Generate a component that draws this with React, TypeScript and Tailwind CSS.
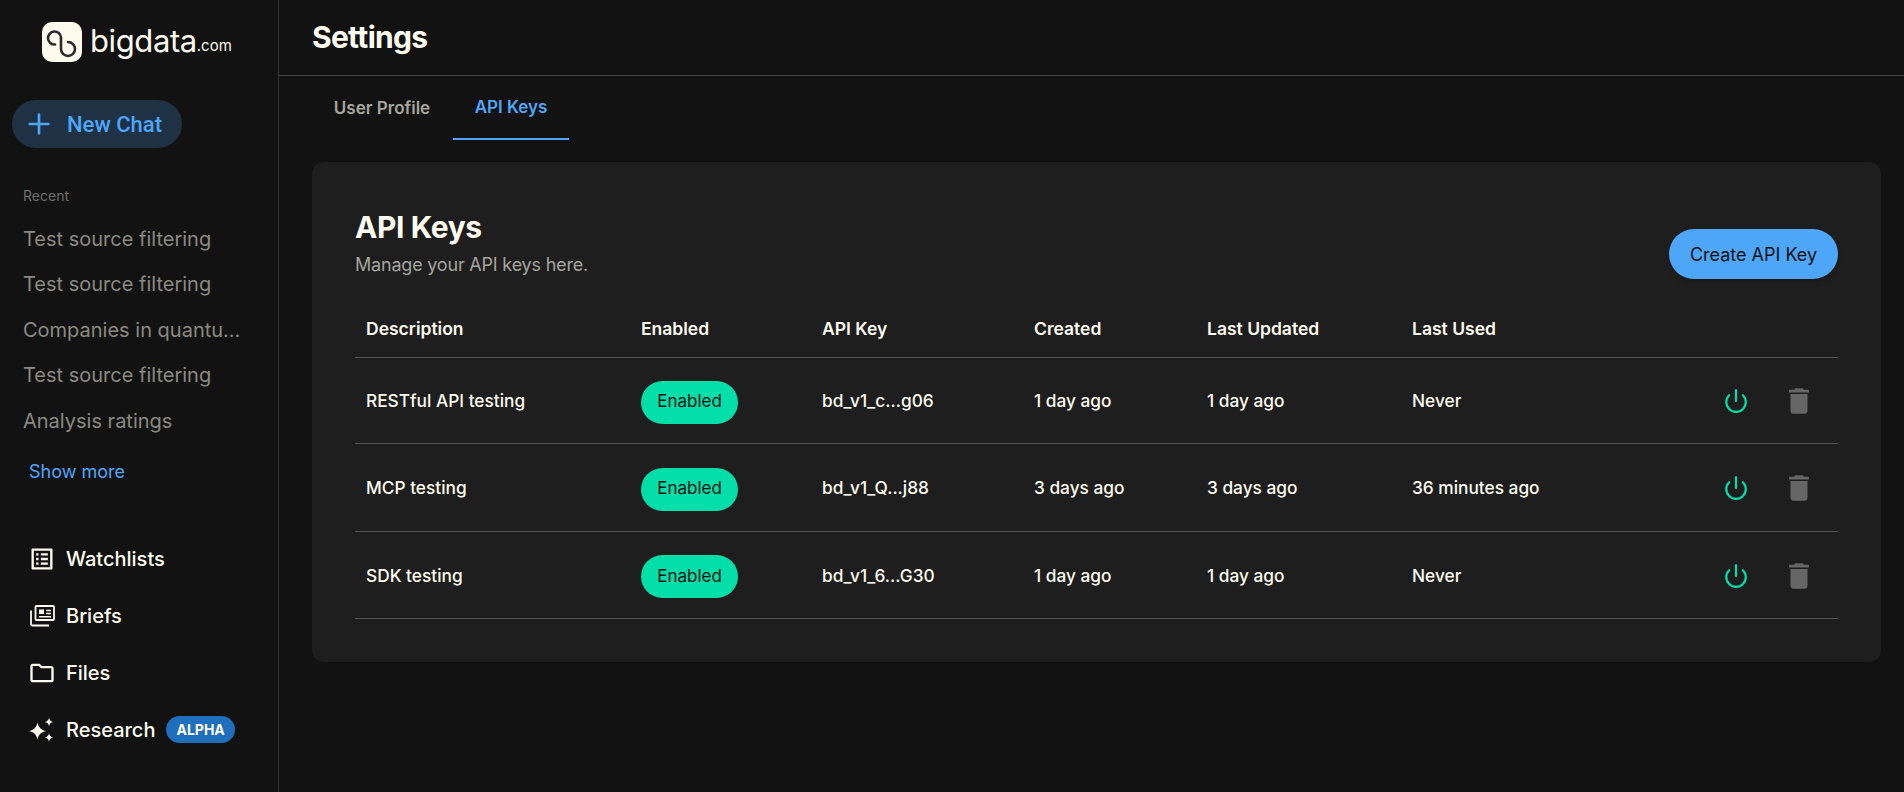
import { Plus, Power } from "lucide-react";
import { MdDelete, MdOutlineFolder, MdOutlineListAlt } from "react-icons/md";

const recent = ["Test source filtering", "Test source filtering", "Companies in quantu...", "Test source filtering", "Analysis ratings"];

const rows = [
  { name: "RESTful API testing", key: "bd_v1_c...g06", created: "1 day ago", updated: "1 day ago", used: "Never", height: "h-[86px]" },
  { name: "MCP testing", key: "bd_v1_Q...j88", created: "3 days ago", updated: "3 days ago", used: "36 minutes ago", height: "h-[88px]" },
  { name: "SDK testing", key: "bd_v1_6...G30", created: "1 day ago", updated: "1 day ago", used: "Never", height: "h-[87px]" },
];

const BriefsIcon = () => (
  <svg viewBox="0 0 28 28" className="h-7 w-7" fill="none" stroke="currentColor" strokeWidth="1.8">
    <rect x="7.500" y="4" width="18.500" height="14" rx="1" />
    <path d="M3 8.500V22a1.500 1.500 0 0 0 1.500 1.500H21" />
    <rect x="11" y="7.500" width="5" height="4.500" fill="currentColor" stroke="none" />
    <path d="M18 8.500h5M18 11.500h5M11 14.800h12" strokeWidth="1.600" />
  </svg>
);

const SparkIcon = () => (
  <svg viewBox="0 0 28 28" className="h-7 w-7" fill="currentColor">
    <path d="M9.500 6.200C10.400 11.400 13.100 14.100 18.300 15C13.100 15.900 10.400 18.600 9.500 23.800C8.600 18.600 5.900 15.900 .7 15C5.900 14.100 8.600 11.400 9.500 6.200z" />
    <path d="M21 1.800C21.500 4.300 22.700 5.500 25.200 6C22.700 6.500 21.500 7.700 21 10.200C20.500 7.700 19.300 6.500 16.800 6C19.300 5.500 20.500 4.300 21 1.800z" />
    <path d="M21 17.300C21.500 19.800 22.700 21 25.200 21.500C22.700 22 21.500 23.200 21 25.700C20.500 23.200 19.300 22 16.800 21.500C19.300 21 20.500 19.800 21 17.300z" />
  </svg>
);

const nav = [
  { icon: <MdOutlineListAlt className="h-7 w-7" />, label: "Watchlists" },
  { icon: <BriefsIcon />, label: "Briefs" },
  { icon: <MdOutlineFolder className="h-7 w-7" />, label: "Files" },
  { icon: <SparkIcon />, label: "Research" },
];

export default function App() {
  return (
    <div className="flex h-[792px] w-[1904px] overflow-hidden bg-[#121212] font-['Inter',sans-serif] text-[#fdfbf0]">
      <aside className="flex w-[279px] shrink-0 flex-col border-r border-[#333] px-3">
        <div className="flex h-[100px] items-start pl-[30px] pt-[22px]">
          <div className="flex h-10 w-10 items-center justify-center rounded-[10px] bg-[#fdfbee]">
            <svg viewBox="0 0 40 40" className="h-10 w-10" fill="none" stroke="#2a2a2a" strokeWidth="2.600" strokeLinecap="round">
              <path d="M13 22.500A6.500 6.500 0 1 1 19 15.500V27A7 7 0 1 0 26 20" />
            </svg>
          </div>
          <span className="ml-[8px] mt-[1px] text-[31px] leading-[36px] tracking-[-0.4px]">bigdata</span>
          <span className="mt-[14px] text-[15px] leading-[20px]">.com</span>
        </div>
        <button className="flex h-12 w-[170px] items-center rounded-full bg-[#1f3144] pl-[11px] font-['Roboto',sans-serif] text-[22px] font-medium text-[#4da6f8]">
          <Plus className="h-8 w-8" />
          <span className="ml-[12px]">New Chat</span>
        </button>
        <p className="mt-[38px] px-[11px] text-[14px] leading-5 text-[#70706b]">Recent</p>
        <ul className="mt-[10px] flex flex-col px-[11px]">
          {recent.map((r, i) => (
            <li key={i} className="flex h-[45.500px] items-center text-[20px] text-[#8a8a82]">{r}</li>
          ))}
        </ul>
        <a className="mt-[14px] px-[17px] text-[18px] leading-7 text-[#4da6f8]">Show more</a>
        <nav className="mt-[59px] flex flex-col gap-[29px] px-[16px]">
          {nav.map((n) => (
            <div key={n.label} className="flex h-7 items-center gap-[10px] text-[20px] font-medium">
              {n.icon}
              {n.label}
              {n.label === "Research" && (
                <span className="ml-[1px] rounded-full bg-[#1f6fbd] px-[10px] py-[3px] text-[14px] font-bold leading-[21px]">ALPHA</span>
              )}
            </div>
          ))}
        </nav>
      </aside>
      <main className="flex min-w-0 flex-1 flex-col">
        <header className="flex h-[76px] items-center border-b border-[#444] pl-[33px]">
          <h1 className="text-[30px] font-bold tracking-[-0.7px]">Settings</h1>
        </header>
        <div className="flex pl-[32px]">
          <div className="flex h-[64px] w-[142px] items-center justify-center pt-[2px] text-[17px] font-semibold text-[#a5a59e]">User Profile</div>
          <div className="flex h-[64px] w-[116px] items-center justify-center border-b-2 border-[#4da6f8] pt-[2px] text-[17px] font-semibold text-[#4da6f8]">API Keys</div>
        </div>
        <section className="ml-[33px] mr-[23px] mt-[22px] rounded-xl bg-[#1e1e1e] px-[43px] pb-[43px] pt-[44px]">
          <div className="flex items-start justify-between">
            <div>
              <h2 className="text-[30px] font-bold leading-[42px] tracking-[-0.4px]">API Keys</h2>
              <p className="mt-[3px] text-[18px] leading-7 tracking-[-0.2px] text-[#a5a59e]">Manage your API keys here.</p>
            </div>
            <button className="mt-[23px] h-[50px] w-[169px] rounded-full bg-[#4da6f8] text-[18px] text-[#121212] shadow-md">Create API Key</button>
          </div>
          <table className="mt-[23px] w-full table-fixed text-[17.300px]">
            <thead>
              <tr className="h-[55px] border-b border-[#555] text-left text-[17.500px]">
                <th className="w-[286px] pl-[11px] font-semibold">Description</th>
                <th className="w-[181px] font-semibold">Enabled</th>
                <th className="w-[212px] font-semibold">API Key</th>
                <th className="w-[173px] font-semibold">Created</th>
                <th className="w-[205px] font-semibold">Last Updated</th>
                <th className="font-semibold">Last Used</th>
                <th className="w-[135px]" />
              </tr>
            </thead>
            <tbody>
              {rows.map((r) => (
                <tr key={r.key} className={`${r.height} border-b border-[#555] font-medium [&>td]:pt-[2px]`}>
                  <td className="pl-[11px]">{r.name}</td>
                  <td>
                    <span className="mt-[2px] inline-flex h-[43px] w-[97px] items-center justify-center rounded-full bg-[#04dfa9] text-[17px] font-normal text-[#121212]">Enabled</span>
                  </td>
                  <td>{r.key}</td>
                  <td>{r.created}</td>
                  <td>{r.updated}</td>
                  <td>{r.used}</td>
                  <td>
                    <div className="flex items-center gap-[33px] pl-[20px]">
                      <Power className="h-[26px] w-[26px] text-[#04dfa9]" strokeWidth={2} />
                      <MdDelete className="h-[34px] w-[34px] text-[#666]" />
                    </div>
                  </td>
                </tr>
              ))}
            </tbody>
          </table>
        </section>
      </main>
    </div>
  );
}
